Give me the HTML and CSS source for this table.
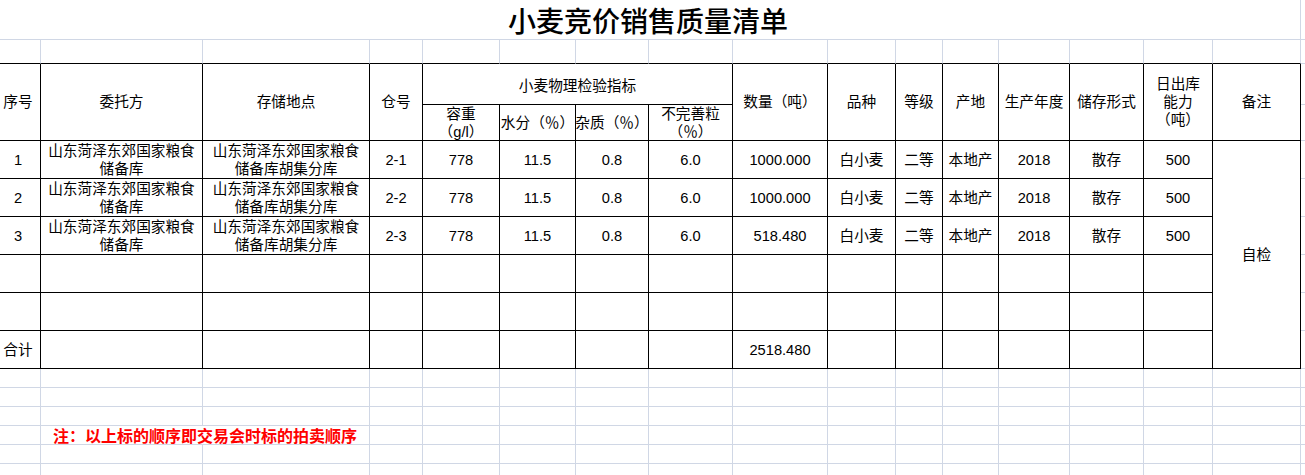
FILE: index.html
```html
<!DOCTYPE html>
<html lang="zh-CN">
<head>
<meta charset="utf-8">
<title>小麦竞价销售质量清单</title>
<link rel="stylesheet" href="styles.css">
</head>
<body>
<div class="sheet">
  <!-- row 1: title -->
  <div class="c title">小麦竞价销售质量清单</div>
  <div class="c"></div>

  <!-- row 2: empty row above table -->
  <div class="c tt"></div><div class="c tt"></div><div class="c tt"></div><div class="c tt"></div>
  <div class="c tt"></div><div class="c tt"></div><div class="c tt"></div><div class="c tt"></div>
  <div class="c tt"></div><div class="c tt"></div><div class="c tt"></div><div class="c tt"></div>
  <div class="c tt"></div><div class="c tt"></div><div class="c tt"></div><div class="c tt"></div>
  <div class="c"></div>

  <!-- row 3: header -->
  <div class="c b rs2">序号</div>
  <div class="c b rs2">委托方</div>
  <div class="c b rs2">存储地点</div>
  <div class="c b rs2">仓号</div>
  <div class="c b cs4 grp">小麦物理检验指标</div>
  <div class="c b rs2">数量（吨）</div>
  <div class="c b rs2">品种</div>
  <div class="c b rs2">等级</div>
  <div class="c b rs2">产地</div>
  <div class="c b rs2">生产年度</div>
  <div class="c b rs2">储存形式</div>
  <div class="c b rs2 ml">日出库<br>能力<br>（吨）</div>
  <div class="c b rs2">备注</div>
  <div class="c"></div>

  <!-- row 4: sub header -->
  <div class="c b ml">容重<br>（g/l）</div>
  <div class="c b">水分（％）</div>
  <div class="c b">杂质（％）</div>
  <div class="c b ml">不完善粒<br>（％）</div>
  <div class="c"></div>

  <!-- data row 1 -->
  <div class="c b">1</div>
  <div class="c b ml">山东菏泽东郊国家粮食<br>储备库</div>
  <div class="c b ml">山东菏泽东郊国家粮食<br>储备库胡集分库</div>
  <div class="c b">2-1</div>
  <div class="c b">778</div>
  <div class="c b">11.5</div>
  <div class="c b">0.8</div>
  <div class="c b">6.0</div>
  <div class="c b">1000.000</div>
  <div class="c b">白小麦</div>
  <div class="c b">二等</div>
  <div class="c b">本地产</div>
  <div class="c b">2018</div>
  <div class="c b">散存</div>
  <div class="c b">500</div>
  <div class="c b rs6">自检</div>
  <div class="c"></div>

  <!-- data row 2 -->
  <div class="c b">2</div>
  <div class="c b ml">山东菏泽东郊国家粮食<br>储备库</div>
  <div class="c b ml">山东菏泽东郊国家粮食<br>储备库胡集分库</div>
  <div class="c b">2-2</div>
  <div class="c b">778</div>
  <div class="c b">11.5</div>
  <div class="c b">0.8</div>
  <div class="c b">6.0</div>
  <div class="c b">1000.000</div>
  <div class="c b">白小麦</div>
  <div class="c b">二等</div>
  <div class="c b">本地产</div>
  <div class="c b">2018</div>
  <div class="c b">散存</div>
  <div class="c b">500</div>
  <div class="c"></div>

  <!-- data row 3 -->
  <div class="c b">3</div>
  <div class="c b ml">山东菏泽东郊国家粮食<br>储备库</div>
  <div class="c b ml">山东菏泽东郊国家粮食<br>储备库胡集分库</div>
  <div class="c b">2-3</div>
  <div class="c b">778</div>
  <div class="c b">11.5</div>
  <div class="c b">0.8</div>
  <div class="c b">6.0</div>
  <div class="c b">518.480</div>
  <div class="c b">白小麦</div>
  <div class="c b">二等</div>
  <div class="c b">本地产</div>
  <div class="c b">2018</div>
  <div class="c b">散存</div>
  <div class="c b">500</div>
  <div class="c"></div>

  <!-- empty row 1 -->
  <div class="c b"></div><div class="c b"></div><div class="c b"></div><div class="c b"></div><div class="c b"></div>
  <div class="c b"></div><div class="c b"></div><div class="c b"></div><div class="c b"></div><div class="c b"></div>
  <div class="c b"></div><div class="c b"></div><div class="c b"></div><div class="c b"></div><div class="c b"></div>
  <div class="c"></div>

  <!-- empty row 2 -->
  <div class="c b"></div><div class="c b"></div><div class="c b"></div><div class="c b"></div><div class="c b"></div>
  <div class="c b"></div><div class="c b"></div><div class="c b"></div><div class="c b"></div><div class="c b"></div>
  <div class="c b"></div><div class="c b"></div><div class="c b"></div><div class="c b"></div><div class="c b"></div>
  <div class="c"></div>

  <!-- total row -->
  <div class="c b">合计</div>
  <div class="c b"></div><div class="c b"></div><div class="c b"></div><div class="c b"></div>
  <div class="c b"></div><div class="c b"></div><div class="c b"></div>
  <div class="c b">2518.480</div>
  <div class="c b"></div><div class="c b"></div><div class="c b"></div><div class="c b"></div><div class="c b"></div><div class="c b"></div>
  <div class="c"></div>

  <!-- grid rows below -->
  <div class="c"></div><div class="c"></div><div class="c"></div><div class="c"></div><div class="c"></div><div class="c"></div>
  <div class="c"></div><div class="c"></div><div class="c"></div><div class="c"></div><div class="c"></div><div class="c"></div>
  <div class="c"></div><div class="c"></div><div class="c"></div><div class="c"></div><div class="c"></div>

  <div class="c"></div><div class="c"></div><div class="c"></div><div class="c"></div><div class="c"></div><div class="c"></div>
  <div class="c"></div><div class="c"></div><div class="c"></div><div class="c"></div><div class="c"></div><div class="c"></div>
  <div class="c"></div><div class="c"></div><div class="c"></div><div class="c"></div><div class="c"></div>

  <div class="c"></div><div class="c"></div><div class="c"></div><div class="c"></div><div class="c"></div><div class="c"></div>
  <div class="c"></div><div class="c"></div><div class="c"></div><div class="c"></div><div class="c"></div><div class="c"></div>
  <div class="c"></div><div class="c"></div><div class="c"></div><div class="c"></div><div class="c"></div>

  <div class="c"></div>
  <div class="c cs2 note">注：以上标的顺序即交易会时标的拍卖顺序</div>
  <div class="c"></div><div class="c"></div><div class="c"></div><div class="c"></div><div class="c"></div><div class="c"></div>
  <div class="c"></div><div class="c"></div><div class="c"></div><div class="c"></div><div class="c"></div><div class="c"></div>
  <div class="c"></div><div class="c"></div>

  <div class="c"></div><div class="c"></div><div class="c"></div><div class="c"></div><div class="c"></div><div class="c"></div>
  <div class="c"></div><div class="c"></div><div class="c"></div><div class="c"></div><div class="c"></div><div class="c"></div>
  <div class="c"></div><div class="c"></div><div class="c"></div><div class="c"></div><div class="c"></div>

  <div class="c"></div><div class="c"></div><div class="c"></div><div class="c"></div><div class="c"></div><div class="c"></div>
  <div class="c"></div><div class="c"></div><div class="c"></div><div class="c"></div><div class="c"></div><div class="c"></div>
  <div class="c"></div><div class="c"></div><div class="c"></div><div class="c"></div><div class="c"></div>
</div>
</body>
</html>
```

FILE: styles.css
```css
html, body {
  margin: 0;
  padding: 0;
  background: #ffffff;
  overflow: hidden;
}

body {
  width: 1305px;
  height: 475px;
  font-family: "Liberation Sans", "Noto Sans CJK SC", sans-serif;
  font-size: 14.67px;
  color: #000000;
}

.sheet {
  display: grid;
  grid-template-columns: 45px 162px 167px 53px 77px 76px 73px 84px 95px 68px 47px 56px 71px 74px 69px 88px 24px;
  grid-template-rows: 40px 24px 41px 36px repeat(6, 38px) repeat(6, 19px);
  margin-left: -4px;
  width: 1329px;
}

.c {
  box-sizing: border-box;
  border-right: 1px solid #d0d7e5;
  border-bottom: 1px solid #d0d7e5;
  display: flex;
  align-items: center;
  justify-content: center;
  text-align: center;
  white-space: nowrap;
  line-height: 18px;
  overflow: visible;
}

.c.b {
  border-right-color: #000000;
  border-bottom-color: #000000;
}

.c.tt {
  border-bottom-color: #000000;
}

.rs2 { grid-row: span 2; }
.rs6 { grid-row: span 6; }
.cs2 { grid-column: span 2; }
.cs4 { grid-column: span 4; }

.grp {
  padding-top: 3px;
}

.title {
  grid-column: span 16;
  font-family: "Noto Sans CJK SC", sans-serif;
  font-size: 28px;
  font-weight: 500;
  line-height: 34px;
}

.note {
  font-family: "Noto Sans CJK SC", sans-serif;
  color: #ff0000;
  font-size: 16px;
  font-weight: 700;
  line-height: 18px;
}
```
